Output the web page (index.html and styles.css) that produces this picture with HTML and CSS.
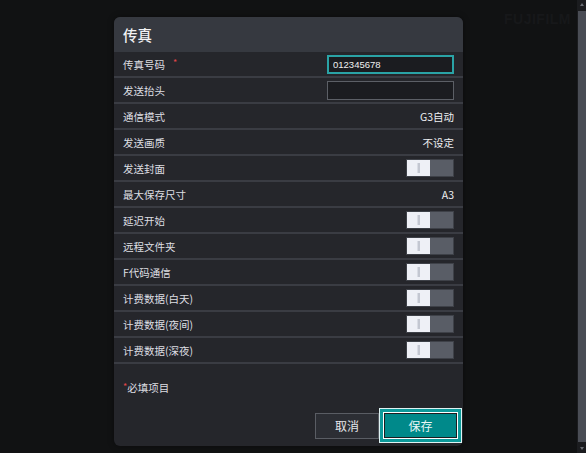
FILE: index.html
```html
<!DOCTYPE html>
<html lang="zh-CN">
<head>
<meta charset="utf-8">
<title>传真</title>
<link rel="stylesheet" href="styles.css">
</head>
<body>
<div class="page">
  <div class="bg-brand">FUJIFILM</div>
  <div class="dialog">
    <div class="dialog-head">传真</div>
    <div class="rows">
      <div class="row"><span class="label">传真号码<span class="req">*</span></span><input class="field focus" type="text" value="012345678"></div>
      <div class="row"><span class="label">发送抬头</span><input class="field" type="text" value=""></div>
      <div class="row"><span class="label">通信模式</span><span class="value">G3自动</span></div>
      <div class="row"><span class="label">发送画质</span><span class="value">不设定</span></div>
      <div class="row"><span class="label">发送封面</span><span class="toggle"><span class="knob"></span></span></div>
      <div class="row"><span class="label">最大保存尺寸</span><span class="value">A3</span></div>
      <div class="row"><span class="label">延迟开始</span><span class="toggle"><span class="knob"></span></span></div>
      <div class="row"><span class="label">远程文件夹</span><span class="toggle"><span class="knob"></span></span></div>
      <div class="row"><span class="label">F代码通信</span><span class="toggle"><span class="knob"></span></span></div>
      <div class="row"><span class="label">计费数据(白天)</span><span class="toggle"><span class="knob"></span></span></div>
      <div class="row"><span class="label">计费数据(夜间)</span><span class="toggle"><span class="knob"></span></span></div>
      <div class="row"><span class="label">计费数据(深夜)</span><span class="toggle"><span class="knob"></span></span></div>
    </div>
    <div class="note"><span class="req-s">*</span>必填项目</div>
    <div class="actions">
      <button class="btn cancel">取消</button>
      <span class="save-ring"><button class="btn save">保存</button></span>
    </div>
  </div>
</div>
<div class="scrollbar">
  <div class="arrow up"></div>
  <div class="thumb"></div>
  <div class="arrow down"></div>
</div>
</body>
</html>
```
FILE: styles.css
```css
html, body {
  margin: 0;
  padding: 0;
  height: 100%;
}
body {
  background: #111213;
  display: flex;
  font-family: "Noto Sans CJK SC", "Noto Sans", sans-serif;
  color: #dcdde0;
  overflow: hidden;
}
.page {
  flex: 1;
  position: relative;
  display: flex;
  justify-content: center;
  align-items: flex-start;
  padding-top: 17px;
}
.bg-brand {
  position: absolute;
  right: 6px;
  top: 11px;
  font-family: "Liberation Sans", sans-serif;
  font-weight: bold;
  font-size: 14px;
  color: #17181a;
  letter-spacing: 0.5px;
}
.dialog {
  position: relative;
  width: 349px;
  height: 429px;
  background: #25262b;
  border-radius: 6px;
  overflow: hidden;
  display: flex;
  flex-direction: column;
  box-shadow: 0 0 6px rgba(0,0,0,0.4);
}
.dialog-head {
  height: 35px;
  background: #363940;
  padding-left: 9px;
  font-size: 14.5px;
  line-height: 35px;
  color: #f2f2f4;
  font-weight: 500;
}
.rows {
  display: flex;
  flex-direction: column;
}
.row {
  height: 24px;
  border-bottom: 2px solid #3a3c43;
  display: flex;
  align-items: center;
  justify-content: space-between;
  padding: 0 9px;
  font-size: 10.5px;
}
.label {
  color: #dddee2;
}
.req {
  color: #e0454a;
  margin-left: 8px;
  font-size: 9px;
  position: relative;
  top: -3px;
}
.value {
  color: #eeeff2;
  font-size: 10.5px;
}
.field {
  box-sizing: border-box;
  width: 127px;
  height: 19px;
  background: #1b1c20;
  border: 1px solid #5c5f66;
  color: #f0f0f0;
  font-family: "Liberation Sans", sans-serif;
  font-weight: normal;
  font-size: 9.5px;
  padding: 0 5px;
  outline: none;
  margin: 0;
}
.field.focus {
  border: 2px solid #2aa3a6;
  padding: 0 4px;
}
.toggle {
  box-sizing: border-box;
  width: 48px;
  height: 18px;
  background: #595d66;
  border: 1px solid #3e4148;
  display: flex;
}
.knob {
  width: 23px;
  height: 16px;
  background: #eef0f6;
  display: flex;
  align-items: center;
  justify-content: center;
}
.knob::before {
  content: "";
  width: 2px;
  height: 10px;
  background: #c3c7d1;
  border-left: 1px solid #d9dce4;
}
.note {
  padding: 16px 0 0 9px;
  font-size: 10.5px;
  color: #dddee2;
}
.req-s {
  color: #e0454a;
  font-size: 9px;
  position: relative;
  top: -2px;
}
.actions {
  margin-top: auto;
  display: flex;
  justify-content: flex-end;
  align-items: center;
  padding: 0 1px 3px 0;
}
.btn {
  box-sizing: border-box;
  height: 26px;
  font-family: "Noto Sans CJK SC", sans-serif;
  font-size: 12px;
  margin: 0;
  padding: 0;
}
.cancel {
  width: 64px;
  background: #2c2e34;
  border: 1px solid #5a5d64;
  color: #e6e6ea;
}
.save-ring {
  display: block;
  border: 1px solid #dff3f3;
  background: #0c9a9a;
  padding: 3px;
}
.save {
  display: block;
  width: 73px;
  height: 25px;
  border: 1px solid #1c1d20;
  outline: 1px solid #ffffff;
  outline-offset: 0;
  background: #00898a;
  color: #e8f6f6;
  margin: 1px;
}
.scrollbar {
  width: 9px;
  background: #1b1c1f;
  display: flex;
  flex-direction: column;
  align-items: center;
}
.thumb {
  flex: 1;
  width: 8px;
  background: #4a4d55;
  margin: 2px 0;
}
.arrow {
  width: 0;
  height: 0;
  border-left: 2px solid transparent;
  border-right: 2px solid transparent;
  margin: 3px 0;
}
.arrow.up {
  border-bottom: 3px solid #6a6d74;
}
.arrow.down {
  border-top: 3px solid #6a6d74;
}
```
